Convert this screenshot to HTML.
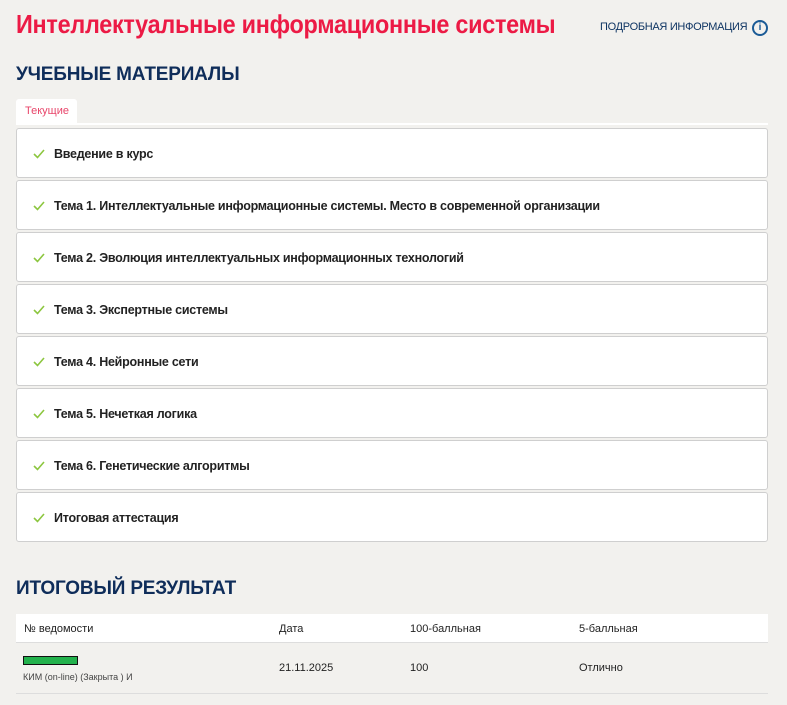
<!DOCTYPE html>
<html><head><meta charset="utf-8"><style>
*{box-sizing:border-box;margin:0;padding:0}
body{width:787px;height:705px;background:#f2f1ee;font-family:"Liberation Sans",sans-serif;position:relative;overflow:hidden;color:#222}
.t{position:absolute;left:16px;top:9px;font-size:26px;color:#ec1a45;font-weight:bold;letter-spacing:-0.3px;transform:scaleX(0.9);transform-origin:0 0;white-space:nowrap}
.info{position:absolute;left:600px;top:21px;font-size:11px;color:#0f3563;letter-spacing:-0.3px;white-space:nowrap}
.ic{position:absolute;left:752px;top:20px;width:16px;height:16px;border:2px solid #1b5b96;border-radius:50%;color:#1b5b96;font-size:10px;font-weight:bold;text-align:center;line-height:12px}
h2{position:absolute;left:16px;font-size:19px;color:#0f2d5a;font-weight:bold;letter-spacing:-0.2px}
.tab{position:absolute;left:16px;top:99px;width:61px;height:25px;background:#fff;border-radius:3px 3px 0 0;color:#e8456a;font-size:11px;padding:6px 0 0 9px}
.line{position:absolute;left:16px;top:123px;width:752px;height:2px;background:#fff}
.card{position:absolute;left:16px;width:752px;height:50px;background:#fff;border:1px solid #cfcfcf;border-radius:3px;font-size:12.5px;font-weight:bold;color:#222;padding:18px 0 0 37px;letter-spacing:-0.25px}
.card svg{position:absolute;left:16px;top:20px}
.hd{position:absolute;left:16px;top:614px;width:752px;height:29px;background:#fff;border-bottom:1px solid #ddd;font-size:11px}
.hd span,.rw span{position:absolute}
.rw{position:absolute;left:16px;top:643px;width:752px;height:51px;border-bottom:1px solid #ddd;font-size:11px}
</style></head><body>
<div class="t">Интеллектуальные информационные системы</div>
<div class="info">ПОДРОБНАЯ ИНФОРМАЦИЯ</div>
<div class="ic">i</div>
<h2 style="top:64px">УЧЕБНЫЕ МАТЕРИАЛЫ</h2>
<div class="tab">Текущие</div>
<div class="line"></div>
<div class="card" style="top:128px"><svg width="12" height="10"><path d="M1 5l3.5 3.5L11 1" stroke="#8cc63f" stroke-width="1.6" fill="none"/></svg>Введение в курс</div>
<div class="card" style="top:180px"><svg width="12" height="10"><path d="M1 5l3.5 3.5L11 1" stroke="#8cc63f" stroke-width="1.6" fill="none"/></svg>Тема 1. Интеллектуальные информационные системы. Место в современной организации</div>
<div class="card" style="top:232px"><svg width="12" height="10"><path d="M1 5l3.5 3.5L11 1" stroke="#8cc63f" stroke-width="1.6" fill="none"/></svg>Тема 2. Эволюция интеллектуальных информационных технологий</div>
<div class="card" style="top:284px"><svg width="12" height="10"><path d="M1 5l3.5 3.5L11 1" stroke="#8cc63f" stroke-width="1.6" fill="none"/></svg>Тема 3. Экспертные системы</div>
<div class="card" style="top:336px"><svg width="12" height="10"><path d="M1 5l3.5 3.5L11 1" stroke="#8cc63f" stroke-width="1.6" fill="none"/></svg>Тема 4. Нейронные сети</div>
<div class="card" style="top:388px"><svg width="12" height="10"><path d="M1 5l3.5 3.5L11 1" stroke="#8cc63f" stroke-width="1.6" fill="none"/></svg>Тема 5. Нечеткая логика</div>
<div class="card" style="top:440px"><svg width="12" height="10"><path d="M1 5l3.5 3.5L11 1" stroke="#8cc63f" stroke-width="1.6" fill="none"/></svg>Тема 6. Генетические алгоритмы</div>
<div class="card" style="top:492px"><svg width="12" height="10"><path d="M1 5l3.5 3.5L11 1" stroke="#8cc63f" stroke-width="1.6" fill="none"/></svg>Итоговая аттестация</div>
<h2 style="top:578px">ИТОГОВЫЙ РЕЗУЛЬТАТ</h2>
<div class="hd"><span style="left:8px;top:9px">№ ведомости</span><span style="left:263px;top:9px">Дата</span><span style="left:394px;top:9px">100-балльная</span><span style="left:563px;top:9px">5-балльная</span></div>
<div class="rw"><div style="position:absolute;left:7px;top:13px;width:55px;height:9px;background:#22b14c;border:1px solid #111"></div><span style="left:7px;top:29px;font-size:9px;color:#444">КИМ (on-line) (Закрыта ) И</span><span style="left:263px;top:19px">21.11.2025</span><span style="left:394px;top:19px">100</span><span style="left:563px;top:19px">Отлично</span></div>
</body></html>
